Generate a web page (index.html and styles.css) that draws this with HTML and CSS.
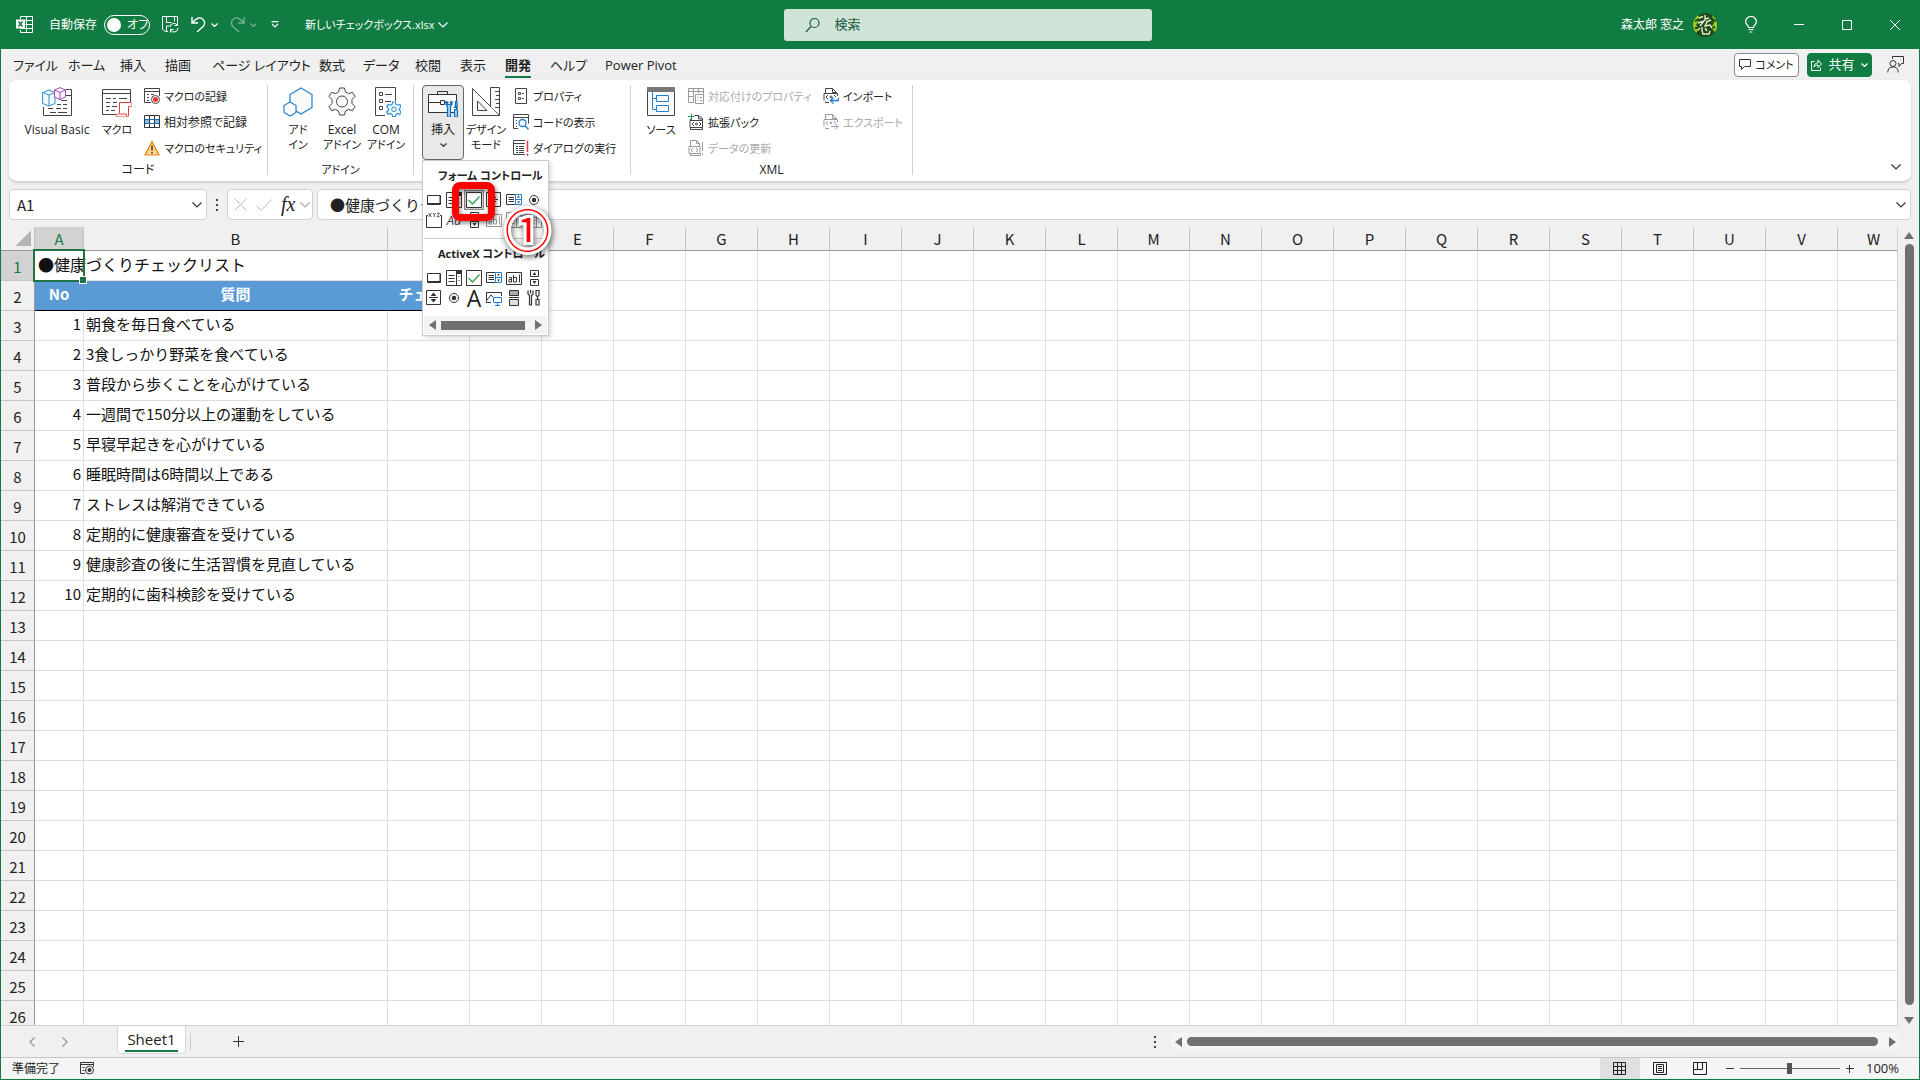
FILE: index.html
```
<!DOCTYPE html>
<html lang="ja">
<head>
  <meta charset="UTF-8">
  <title>新しいチェックボックス.xlsx</title>
  <link rel="stylesheet" href="styles.css">
</head>
<body>

  <header class="titlebar">
    <div class="title-left">
      <svg class="app-icon" width="17" height="17" viewBox="0 0 17 17" fill="none" stroke="#fff">
        <path d="M4.500 3V.5h12v16h-12V14M4.500 4.500h12M9.500 8.500h7M4.500 12.500h12M10.500.5v16"/>
        <path fill="#fff" stroke="none" d="M0 3.500h9v9H0z"/>
        <path stroke="#107c41" stroke-width="1.500" d="M2.500 5.500l4 5M6.500 5.500l-4 5"/>
      </svg>
      <span class="autosave">自動保存</span>
      <button class="toggle"><span class="knob"></span>オフ</button>
      <button class="tool" aria-label="保存">
        <svg width="17" height="17" viewBox="0 0 17 17" fill="none" stroke="#fff">
          <path d="M6 15.500H3L.5 13V.5h15v6M4.500.5v6h5M12.500.5v5M4.500 15v-5h3"/>
          <path d="M8 11a4 4 0 0 1 7.500-1.500M15.500 6.500v3h-3M16 12a4 4 0 0 1-7.500 2M8.500 16.500v-3h3"/>
        </svg>
      </button>
      <button class="tool" aria-label="元に戻す">
        <svg width="15" height="17" viewBox="0 0 15 17" fill="none" stroke="#fff" stroke-width="1.400">
          <path d="M1 1v6h6M1.500 6.500C5 2 9 .8 11.500 3s3 5 .5 7.500L6 16"/>
        </svg>
      </button>
      <svg class="mini" width="7" height="4" viewBox="0 0 7 4" fill="none" stroke="#fff" stroke-width="1.300"><path d="M.5.5l3 3 3-3"/></svg>
      <button class="tool faded" aria-label="やり直し">
        <svg width="15" height="17" viewBox="0 0 15 17" fill="none" stroke="#fff" stroke-width="1.400">
          <path d="M14 1v6H8M13.500 6.500C10 2 6 .8 3.500 3s-3 5-.5 7.500L9 16"/>
        </svg>
      </button>
      <svg class="mini faded" width="7" height="4" viewBox="0 0 7 4" fill="none" stroke="#fff" stroke-width="1.300"><path d="M.5.5l3 3 3-3"/></svg>
      <button class="tool tool-custom" aria-label="クイック アクセス">
        <svg width="8" height="7" viewBox="0 0 8 7" fill="none" stroke="#fff" stroke-width="1.200"><path d="M.5.600h7M1 3l3 3 3-3"/></svg>
      </button>
      <button class="filename">新しいチェックボックス.xlsx
        <svg width="10" height="6" viewBox="0 0 10 6" fill="none" stroke="#fff" stroke-width="1.200"><path d="M.5.5L5 5 9.500.5"/></svg>
      </button>
    </div>
    <label class="search">
      <svg width="16" height="16" viewBox="0 0 16 16" fill="none" stroke="#185c37" stroke-width="1.200"><circle cx="9.500" cy="6" r="4.500"/><path d="M6 9.500L1 15"/></svg>
      <input type="text" placeholder="検索">
    </label>
    <div class="title-right">
      <span class="user">森太郎 窓之</span>
      <svg class="avatar" width="24" height="24" viewBox="0 0 24 24" fill="none">
        <circle cx="12" cy="12" r="12" fill="#1d4a17"/>
        <path fill="#9ccc1f" d="M0 12a12 12 0 0 1 5-9.700L7 6l-4 6 3 4-3 4a12 12 0 0 1-3-8zM19 2.300A12 12 0 0 1 22 19l-4-4 3-5z"/>
        <path stroke="#1d4a17" stroke-width="2" d="M2 8l5-2M2 15h5M18 6l5 2M18 15l4-1"/>
        <path stroke="#e6eed0" stroke-width="1.400" d="M6 5l4-1.500M12 2v4l4-1M5 10l6-2-4 5M13 9l5-2M14 9l-2 4 5-1 2 3M5 17l2-2M9 14v4l1 3h6l1-3M12 15l2 3"/>
      </svg>
      <button class="tool bulb" aria-label="ヒント">
        <svg width="12" height="17" viewBox="0 0 12 17" fill="none" stroke="#fff" stroke-width="1.200"><path d="M3.500 11.500C3.500 9.500.6 8.500.6 5.500a5.400 5 0 0 1 10.800 0c0 3-2.900 4-2.900 6zM3.500 13.500h5M4.500 16h3"/></svg>
      </button>
      <button class="winctl" aria-label="最小化"><svg width="10" height="10" viewBox="0 0 10 10" stroke="#fff"><path d="M0 4.500h10"/></svg></button>
      <button class="winctl" aria-label="最大化"><svg width="10" height="10" viewBox="0 0 10 10" stroke="#fff" fill="none"><path d="M.5.5h9v9h-9z"/></svg></button>
      <button class="winctl" aria-label="閉じる"><svg width="10" height="10" viewBox="0 0 10 10" stroke="#fff"><path d="M0 0l10 10M10 0L0 10"/></svg></button>
    </div>
  </header>

  <nav class="tabs">
    <div class="tab-list">
      <a href="#">ファイル</a>
      <a href="#">ホーム</a>
      <a href="#">挿入</a>
      <a href="#">描画</a>
      <a href="#">ページ レイアウト</a>
      <a href="#">数式</a>
      <a href="#">データ</a>
      <a href="#">校閲</a>
      <a href="#">表示</a>
      <a href="#" class="active">開発</a>
      <a href="#">ヘルプ</a>
      <a href="#">Power Pivot</a>
    </div>
    <div class="tab-actions">
      <button class="comment">
        <svg width="12" height="11" viewBox="0 0 12 11" fill="none" stroke="#333"><path d="M.5.5h11v7h-6l-3 3v-3h-2z"/></svg>
        コメント
      </button>
      <button class="share">
        <svg width="11" height="12" viewBox="0 0 11 12" fill="none" stroke="#fff"><path d="M3.500 2.500h-3v9h9v-3M3 8c0-3 2-4 4-4V1l3.500 4L7 8.500V6C5 6 4 6.500 3 8z"/></svg>
        共有
        <svg width="7" height="4" viewBox="0 0 7 4" fill="none" stroke="#fff" stroke-width="1.200"><path d="M.5.5l3 3 3-3"/></svg>
      </button>
      <button class="tool" aria-label="ユーザー">
        <svg width="17" height="17" viewBox="0 0 17 17" fill="none" stroke="#333"><path d="M5.500 3V.5h11v7h-2l-2.500 3v-3h-1"/><circle cx="6" cy="7.500" r="3"/><path d="M.8 16.500c0-4 2.200-5.500 5.200-5.500s5.200 1.500 5.200 5.500"/></svg>
      </button>
    </div>
  </nav>

  <section class="ribbon">
    <div class="group group-code">
      <div class="group-body">
        <button class="big wide">
          <svg width="30" height="30" viewBox="0 0 30 30" fill="none" stroke="#444">
            <path d="M24 2.500h5.500v26h-28V20M24 8.500h5M8 25.500h6M16 25.500h9M19 13.500h6M15 17.500h4M21 17.500h4M14 21.500h5M21 21.500h4M6 21.500h5"/>
            <path stroke="#2b8fd6" fill="#f4f9fd" d="M.6 5.500L7 3l6 2.500v11L7 19 .6 16.500zM.6 5.500L7 8l6-2.500M7 8v11"/>
            <path stroke="#a349b5" fill="#fbf4fc" d="M12.500 3L18 .6 23.500 3v7L18 12.500 12.500 10zM12.500 3L18 5.500 23.500 3M18 5.500v7"/>
          </svg>
          <span>Visual Basic</span>
        </button>
        <button class="big">
          <svg width="30" height="30" viewBox="0 0 30 30" fill="none" stroke="#444">
            <path d="M14 27.500H.5v-25h28v13M.5 6.500h28M4 11.500h5M11 11.500h3M17 11.500h8M4 15.500h4M11 15.500h4M4 19.500h4M10 19.500h5M4 23.500h3M9 23.500h4"/>
            <path stroke="#e8413c" fill="#fff" d="M17.500 26V15.500h11c2 0 2 4 0 4h-2V29c0 .8-1 1-2 1h-9c-1.500 0-1.500-3 0-3h9v2"/>
          </svg>
          <span class="kana">マクロ</span>
        </button>
        <div class="stack">
          <button class="small kana">
            <svg width="16" height="16" viewBox="0 0 16 16" fill="none" stroke="#444"><path d="M7 14.500H.5V.5h15V8M.5 3.500h15M3 6.500h2M7 6.500h3M3 9.500h2M3 12.500h2"/><circle cx="11.500" cy="11.500" r="4" fill="#fff"/><circle cx="11.500" cy="11.500" r="2.500" fill="#e33" stroke="none"/></svg>
            マクロの記録
          </button>
          <button class="small">
            <svg width="16" height="16" viewBox="0 0 16 16" fill="none" stroke="#333"><path fill="#7fbdf0" stroke="none" d="M1 5h14v5H1z"/><path fill="#fff" stroke="none" d="M6 5h4v5H6z"/><path d="M.5 1.500h15v12H.5zM.5 5.500h15M.5 9.500h15M5.500 1.500v12M10.500 1.500v12"/><path stroke="#1a6fc0" d="M1 5.500h14M1 9.500h14"/></svg>
            相対参照で記録
          </button>
          <button class="small kana">
            <svg width="16" height="16" viewBox="0 0 16 16"><path d="M8 1.500l7 13.500H1z" fill="#fcd58a" stroke="#e08214" stroke-width="1.200"/><path d="M8 5.500v5M8 12v1.500" stroke="#333" stroke-width="1.400"/></svg>
            マクロのセキュリティ
          </button>
        </div>
      </div>
      <div class="group-name">コード</div>
    </div>

    <div class="group group-addin">
      <div class="group-body">
        <button class="big">
          <svg width="30" height="30" viewBox="0 0 30 30" fill="#fafafa" stroke="#1f7fd0" stroke-width="1.200"><path d="M18 1l11 6.500v13L18 27 7 20.500v-13z"/><path fill="#fff" d="M7 15l6 3.500v7L7 29l-6-3.500v-7z"/></svg>
          <span class="kana">アド<br>イン</span>
        </button>
        <button class="big">
          <svg width="30" height="30" viewBox="0 0 30 30" fill="#fafafa" stroke="#444"><path d="M12.500 1h5l1 4 3 1.600 4-1.300 2.500 4.200-3 3v4l3 3-2.500 4.200-4-1.300-3 1.600-1 4h-5l-1-4-3-1.600-4 1.300L2 19.500l3-3v-4l-3-3 2.500-4.200 4 1.300 3-1.600z"/><circle cx="15" cy="14.500" r="5.500"/></svg>
          <span>Excel<br><span class="kana">アドイン</span></span>
        </button>
        <button class="big">
          <svg width="30" height="30" viewBox="0 0 30 30" fill="none" stroke="#444"><path d="M14 28.500H4.500V.5h20V14M8.500 5.500h3v3h-3zM8.500 12.500h3v3h-3zM8.500 19.500h3v3h-3zM14 7.500h7M14 14.500h6"/><path stroke="#2b8fd6" stroke-width="1.200" fill="#f4f9fd" d="M21.700 15h2.600l.7 2.300 1.600.9 2.300-.8 1.300 2.300-1.700 1.700v1.800l1.700 1.700-1.300 2.300-2.300-.8-1.600.9-.7 2.300h-2.600l-.7-2.300-1.600-.9-2.300.8-1.300-2.300 1.700-1.700v-1.800l-1.700-1.700 1.300-2.300 2.300.8 1.600-.9z"/><circle cx="23" cy="22.300" r="2.300" stroke="#2b8fd6"/></svg>
          <span>COM<br><span class="kana">アドイン</span></span>
        </button>
      </div>
      <div class="group-name kana">アドイン</div>
    </div>

    <div class="group group-control">
      <div class="group-body">
        <div class="insert">
          <button class="big pressed">
            <svg width="30" height="30" viewBox="0 0 30 30" fill="none" stroke="#333"><path fill="#fafafa" d="M.5 7.500h28v18H.5z"/><path d="M9.500 7V4.500h10V7M.5 15.500h12M16.500 15.500h4M12.500 13.500h4v4h-4z"/><path stroke="#0f6cbd" fill="#a9d3f5" stroke-width="1.200" d="M18 14.500v3l1.500 2V30h3V19.500l1.500-2v-3l-1.500.5v2.500h-3V15zM27.500 14.500h1.500v5l1 1H26.500l1-1zM26.500 22.500h3V30h-3z"/></svg>
            <span>挿入</span>
            <svg class="drop" width="7" height="4" viewBox="0 0 7 4" fill="none" stroke="#333" stroke-width="1.200"><path d="M.5.5l3 2.800 3-2.800"/></svg>
          </button>

          <div class="gallery">
            <h3>フォーム コントロール</h3>
            <div class="controls">
              <button aria-label="ボタン"><svg><use href="#i-button"/></svg></button>
              <button aria-label="コンボ ボックス"><svg><use href="#i-combo"/></svg></button>
              <button class="hover" aria-label="チェック ボックス"><svg><use href="#i-check"/></svg></button>
              <button aria-label="スピン ボタン"><svg><use href="#i-spin"/></svg></button>
              <button aria-label="リスト ボックス"><svg><use href="#i-list"/></svg></button>
              <button aria-label="オプション ボタン"><svg><use href="#i-radio"/></svg></button>
              <button aria-label="グループ ボックス"><svg><use href="#i-group"/></svg></button>
              <button class="label-icon" aria-label="ラベル">Aa</button>
              <button aria-label="スクロール バー"><svg><use href="#i-scroll"/></svg></button>
              <button class="off" aria-label="テキスト フィールド"><svg><use href="#i-text"/></svg></button>
              <button class="off" aria-label="コンボ リスト"><svg><use href="#i-combo"/></svg></button>
              <button class="off" aria-label="コンボ ドロップダウン"><svg><use href="#i-combo"/></svg></button>
            </div>
            <h3 class="second">ActiveX コントロール</h3>
            <div class="controls">
              <button aria-label="コマンド ボタン"><svg><use href="#i-button"/></svg></button>
              <button aria-label="コンボ ボックス"><svg><use href="#i-combo"/></svg></button>
              <button aria-label="チェック ボックス"><svg><use href="#i-check"/></svg></button>
              <button aria-label="リスト ボックス"><svg><use href="#i-list"/></svg></button>
              <button aria-label="テキスト ボックス"><svg><use href="#i-text"/></svg></button>
              <button aria-label="スクロール バー"><svg><use href="#i-scroll"/></svg></button>
              <button aria-label="スピン ボタン"><svg><use href="#i-spin"/></svg></button>
              <button aria-label="オプション ボタン"><svg><use href="#i-radio"/></svg></button>
              <button class="letter" aria-label="ラベル">A</button>
              <button aria-label="イメージ"><svg><use href="#i-image"/></svg></button>
              <button aria-label="トグル ボタン"><svg><use href="#i-toggle"/></svg></button>
              <button aria-label="コントロールの選択"><svg><use href="#i-tools"/></svg></button>
            </div>
            <div class="gallery-scroll"><i class="arrow left"></i><span class="thumb"></span><i class="arrow right"></i></div>
          </div>
          <div class="mark-box"></div>
          <div class="mark-number">①</div>
        </div>
        <button class="big">
          <svg width="30" height="30" viewBox="0 0 30 30" fill="#fafafa" stroke="#444"><path d="M1.500 1.500v27h27z"/><path d="M6.500 14v9.500H16z"/><path d="M28.500 28V.5h-9v19M28 4.500h-4M28 8.500h-3M28 12.500h-4M28 16.500h-3M28 20.500h-4"/></svg>
          <span class="kana">デザイン<br>モード</span>
        </button>
        <div class="stack">
          <button class="small kana">
            <svg width="16" height="16" viewBox="0 0 16 16" fill="none" stroke="#444"><path d="M2.500.5h11v15h-11zM5.500 4.500h2v2h-2zM5.500 9.500h2v2h-2zM9 5.500h2M9 10.500h2"/></svg>
            プロパティ
          </button>
          <button class="small kana">
            <svg width="16" height="16" viewBox="0 0 16 16" fill="none" stroke="#444"><path d="M5 14.500H.5V.5h15v9M.5 3.500h15M3 6.500h1M3 9.500h1M3 12.500h1"/><circle cx="9.500" cy="9" r="3.500" stroke="#1f7fd0" stroke-width="1.300"/><path stroke="#1f7fd0" stroke-width="1.300" d="M12 11.500l3.500 4"/></svg>
            コードの表示
          </button>
          <button class="small kana">
            <svg width="16" height="16" viewBox="0 0 16 16" fill="none" stroke="#444"><path d="M12 14.500H.5V.5H12M.5 3.500H12M3 6.500h2M6 6.500h5M3 8.500h2M6 8.500h5M3 10.500h2M6 10.500h5M3 12.500h2M6 12.500h5"/><path stroke="#e8413c" stroke-width="1.500" d="M14.500.5V12M14.500 13.500V16"/></svg>
            ダイアログの実行
          </button>
        </div>
      </div>
    </div>

    <div class="group group-xml">
      <div class="group-body">
        <button class="big">
          <svg width="30" height="30" viewBox="0 0 30 30" fill="none" stroke="#444"><path fill="#fafafa" d="M1.500.5h27v28h-27z"/><path fill="#777" stroke="none" d="M1 0h28v5H1z"/><path stroke="#1f7fd0" d="M6.500 5v17.500H10M6.500 11.500H10M10.500 8.500h12v6h-12zM10.500 18.500h12v6h-12z"/></svg>
          <span class="kana">ソース</span>
        </button>
        <div class="stack maps">
          <button class="small kana" disabled>
            <svg width="16" height="16" viewBox="0 0 16 16" fill="none" stroke="#999"><path d="M6 14.500H.5V.5h15V6M.5 3.500h15M.5 8.500H6M5.500 1v13M10.500 1v4M7.500 6.500h8v9h-8zM9.500 9.500h1M9.500 12.500h1M12 9.500h2M12 12.500h2"/></svg>
            対応付けのプロパティ
          </button>
          <button class="small kana">
            <svg width="16" height="16" viewBox="0 0 16 16" fill="none" stroke="#444"><path d="M6.500 1.500h4l4 3V6M10.500 1.500v3.500h4M2.500 5v1M2.500 13.500v2h12v-2M2 6.500h12.500v7H2zM6 8l-2 2 2 2M11 8l2 2-2 2"/><circle cx="8.500" cy="10" r="1"/><path stroke="#1e9e52" d="M0 2.500h6M3.500 0v6"/></svg>
            拡張パック
          </button>
          <button class="small kana" disabled>
            <svg width="16" height="16" viewBox="0 0 16 16" fill="none" stroke="#999"><path d="M2.500 7V.5h6l3 3V7M8.500.5v3h3M2.500 13.500v2h10v-2M1 6.500h11v7H1zM5 8l-2 2 2 2M8 8l2 2-2 2M14.500 2v9M14.500 13v2"/></svg>
            データの更新
          </button>
        </div>
        <div class="stack">
          <button class="small kana">
            <svg width="16" height="16" viewBox="0 0 16 16" fill="none" stroke="#444"><path d="M2.500 5V.5h7l4 4V6M9.500.5v4h4M2.500 13.500v1H6M1 12.500V5.500h13.500V8M5 7L3 9l2 2M11 7l2 2"/><circle cx="8" cy="9" r="1"/><path stroke="#1f7fd0" stroke-width="1.300" d="M15.500 9.500v3H7.500M10.500 9.500l-3 3 3 3"/></svg>
            インポート
          </button>
          <button class="small kana" disabled>
            <svg width="16" height="16" viewBox="0 0 16 16" fill="none" stroke="#999"><path d="M2.500 5V.5h7l4 4V6M9.500.5v4h4M2.500 13.500v1H6M1 12.500V5.500h13.500V8M5 7L3 9l2 2M11 7l2 2M8 12.500h7M12 9.500l3 3-3 3"/><circle cx="8" cy="9" r="1"/></svg>
            エクスポート
          </button>
        </div>
      </div>
      <div class="group-name">XML</div>
    </div>
    <button class="collapse" aria-label="リボンを折りたたむ"><svg width="10" height="6" viewBox="0 0 10 6" fill="none" stroke="#333" stroke-width="1.200"><path d="M.5.5L5 5 9.500.5"/></svg></button>
  </section>

  <section class="formula">
    <div class="namebox">
      <input type="text" value="A1" aria-label="名前ボックス">
      <svg width="10" height="6" viewBox="0 0 10 6" fill="none" stroke="#333" stroke-width="1.200"><path d="M.5.5L5 5 9.500.5"/></svg>
    </div>
    <svg class="dots" width="2" height="12" viewBox="0 0 2 12" fill="#444"><path d="M0 0h2v2H0zM0 5h2v2H0zM0 10h2v2H0z"/></svg>
    <div class="fx">
      <svg width="13" height="13" viewBox="0 0 13 13" stroke="#bbb"><path d="M.5.5l12 12M12.500.5l-12 12"/></svg>
      <svg width="16" height="12" viewBox="0 0 16 12" stroke="#bbb" fill="none"><path d="M.5 6.500l4.500 5L15.500.5"/></svg>
      <i>fx</i>
      <svg width="10" height="6" viewBox="0 0 10 6" fill="none" stroke="#aaa" stroke-width="1.200"><path d="M.5.5L5 5 9.500.5"/></svg>
    </div>
    <div class="content">
      <input type="text" value="●健康づくりチェックリスト" aria-label="数式バー">
      <svg width="10" height="6" viewBox="0 0 10 6" fill="none" stroke="#333" stroke-width="1.200"><path d="M.5.5L5 5 9.500.5"/></svg>
    </div>
  </section>

  <main class="workbook">
    <div class="grid">
      <table class="sheet">
        <colgroup id="cols"></colgroup>
        <thead><tr id="letters"></tr></thead>
        <tbody id="rows"></tbody>
      </table>
    </div>
    <div class="vscroll"><i class="arrow up"></i><span class="thumb"></span><i class="arrow down"></i></div>
  </main>

  <div class="sheetbar">
    <button class="nav" aria-label="前のシート"><svg width="6" height="10" viewBox="0 0 6 10" fill="none" stroke="#999" stroke-width="1.300"><path d="M5.500.5L1 5l4.500 4.500"/></svg></button>
    <button class="nav" aria-label="次のシート"><svg width="6" height="10" viewBox="0 0 6 10" fill="none" stroke="#999" stroke-width="1.300"><path d="M.5.5L5 5 .5 9.500"/></svg></button>
    <button class="sheet-tab"><span>Sheet1</span></button>
    <span class="tab-line"></span>
    <button class="add" aria-label="新しいシート"><svg width="11" height="11" viewBox="0 0 11 11" stroke="#333"><path d="M5.500 0v11M0 5.500h11"/></svg></button>
    <svg class="dots" width="2" height="12" viewBox="0 0 2 12" fill="#444"><path d="M0 0h2v2H0zM0 5h2v2H0zM0 10h2v2H0z"/></svg>
    <div class="hscroll"><i class="arrow left"></i><span class="thumb"></span><i class="arrow right"></i></div>
  </div>

  <footer class="status">
    <span>準備完了</span>
    <svg class="record" width="15" height="13" viewBox="0 0 15 13" fill="none" stroke="#333"><path d="M5 11.500H.5V.5h13v4M.5 2.500h13M2.500 5.500h2M2.500 8.500h2"/><circle cx="9.500" cy="8" r="4"/><circle cx="9.500" cy="8" r="2" fill="#333" stroke="none"/></svg>
    <div class="views">
      <button class="view on" aria-label="標準"><svg width="13" height="13" viewBox="0 0 13 13" fill="none" stroke="#222"><path d="M.5.5h12v12H.5zM.5 4.500h12M.5 8.500h12M4.500.5v12M8.500.5v12"/></svg></button>
      <button class="view" aria-label="ページ レイアウト"><svg width="14" height="13" viewBox="0 0 14 13" fill="none" stroke="#222"><path d="M.5.5h13v12H.5zM3.500 2.500h7v8h-7zM5 4.500h4M5 6.500h4M5 8.500h4"/></svg></button>
      <button class="view" aria-label="改ページ"><svg width="14" height="13" viewBox="0 0 14 13" fill="none" stroke="#222"><path d="M.5.5h13v12H.5zM4.500.5v7h5v-7M.5 7.500h4"/></svg></button>
    </div>
    <button class="step" aria-label="縮小"><svg width="8" height="8" viewBox="0 0 8 8" stroke="#333"><path d="M0 3.500h8"/></svg></button>
    <input class="zoom" type="range" min="0" max="100" value="50" aria-label="ズーム">
    <button class="step" aria-label="拡大"><svg width="8" height="8" viewBox="0 0 8 8" stroke="#333"><path d="M0 3.500h8M3.500 0v8"/></svg></button>
    <span class="percent">100%</span>
  </footer>

  <svg class="defs" width="0" height="0">
    <defs>
      <symbol id="i-button" viewBox="0 0 16 16"><path fill="none" stroke="#333" d="M1.500 3.500h13v9h-13z"/><path stroke="#333" d="M14 4v8M1 11.500h13"/></symbol>
      <symbol id="i-combo" viewBox="0 0 16 16"><path fill="none" stroke="#333" d="M.5.5h15v15H.5zM10.500 1v14M2.500 5.500h6M2.500 8.500h6M2.500 11.500h6M13 6v1M13 10v1"/><path fill="#333" d="M10 0h6v4h-6z"/></symbol>
      <symbol id="i-check" viewBox="0 0 16 16"><path fill="#fff" stroke="#333" d="M.5.5h15v15H.5z"/><path fill="none" stroke="#2ea04f" stroke-width="1.300" d="M2.500 8l4 4 7-7.500"/></symbol>
      <symbol id="i-spin" viewBox="0 0 16 16"><path fill="none" stroke="#333" d="M.5.5h14v14H.5zM3 7.500h9"/><path fill="#333" d="M7.500 2.500l3 3.500h-6zM7.500 12.500l3-3.500h-6z"/></symbol>
      <symbol id="i-list" viewBox="0 0 16 16"><path fill="none" stroke="#333" d="M9 2.500H.5v10H9M2.500 5.500H8M2.500 7.500H8M2.500 9.500H8"/><path fill="none" stroke="#1f7fd0" d="M9.500 2.500h6v10h-6zM9.500 7.500h6"/><path fill="#333" d="M12.500 3.500l1.500 2h-3zM12.500 11.500l1.500-2h-3z"/></symbol>
      <symbol id="i-radio" viewBox="0 0 16 16"><circle cx="8" cy="8" r="4.500" fill="none" stroke="#333"/><circle cx="8" cy="8" r="2.300" fill="#333"/></symbol>
      <symbol id="i-group" viewBox="0 0 16 16"><path fill="none" stroke="#333" d="M2 3.500H.5v12h15v-12H14"/><path fill="none" stroke="#333" stroke-width=".8" d="M2.500 1l3 4M5.500 1l-3 4M7 1l1.300 2L9.700 1M8.300 3v2M11 1.300h2.500L11 4.700h2.700"/></symbol>
      <symbol id="i-scroll" viewBox="0 0 16 16"><path fill="none" stroke="#333" d="M4.500.5h8v6h-8zM4.500 9.500h8v6h-8z"/><path fill="#333" d="M8.500 2l2 3h-4zM8.500 14l2-3h-4z"/></symbol>
      <symbol id="i-text" viewBox="0 0 16 16"><path fill="none" stroke="#333" d="M.5 2.500h15v12H.5zM13.500 4.500v8M3 7.500h2.500V12H3V9.500h2.500M7.500 5v7h3V7.500h-3"/></symbol>
      <symbol id="i-image" viewBox="0 0 16 16"><path fill="none" stroke="#333" d="M5 12.500H.5v-10h15V6M1 10l4-5 3 3"/><path fill="#fff" stroke="#1f7fd0" d="M7.500 7.500h8v5h-8zM11.500 12.500v2.500M9 15.500h5"/></symbol>
      <symbol id="i-toggle" viewBox="0 0 16 16"><path fill="#aaa" stroke="#333" d="M3.500.5h9v5h-9z"/><path fill="#ddd" stroke="#333" d="M3.500 9.500h9v6h-9z"/><path stroke="#333" d="M3 7.500h10"/></symbol>
      <symbol id="i-tools" viewBox="0 0 16 16"><path fill="none" stroke="#333" stroke-width="1.200" d="M2 .5V4l1.500 1.500V15h2V5.500L7 4V.5M4.500 0v3.500M10 .5h3V5l-1.500 2L10 5zM11.500 7v2M10 9.500h3V15h-3z"/></symbol>
    </defs>
  </svg>

  <script>
    const widths = [34, 49, 304, 82];
    const letters = 'ABCDEFGHIJKLMNOPQRSTUVW'.split('');
    const questions = [
      '朝食を毎日食べている',
      '3食しっかり野菜を食べている',
      '普段から歩くことを心がけている',
      '一週間で150分以上の運動をしている',
      '早寝早起きを心がけている',
      '睡眠時間は6時間以上である',
      'ストレスは解消できている',
      '定期的に健康審査を受けている',
      '健康診査の後に生活習慣を見直している',
      '定期的に歯科検診を受けている'
    ];

    document.getElementById('cols').innerHTML = ['', ...letters].map((l, i) =>
      '<col style="width:' + (widths[i] || 72) + 'px">').join('');

    document.getElementById('letters').innerHTML = '<th class="corner"></th>' + letters.map(l =>
      '<th' + (l === 'A' ? ' class="current"' : '') + '>' + l + '</th>').join('');

    let html = '';
    for (let r = 1; r <= 26; r++) {
      const cells = letters.map(() => '');
      if (r === 1) cells[0] = '●健康づくりチェックリスト';
      if (r === 2) { cells[0] = 'No'; cells[1] = '質問'; cells[2] = 'チェック'; }
      if (r > 2 && r < 13) { cells[0] = r - 2; cells[1] = questions[r - 3]; }
      html += '<tr class="' + (r === 1 ? 'first' : r === 2 ? 'head' : '') + '"><th' + (r === 1 ? ' class="current"' : '') + '>' + r + '</th>' +
        cells.map(c => '<td>' + c + '</td>').join('') + '</tr>';
    }
    document.getElementById('rows').innerHTML = html;
  </script>

</body>
</html>
```

FILE: styles.css
```
* {
  box-sizing: border-box;
}

body {
  margin: 0;
  height: 100vh;
  display: flex;
  flex-direction: column;
  overflow: hidden;
  background-color: #f0f0f0;
  border: 1px solid #107c41;
  border-top: none;
  color: #222;
  font-family: "Open Sans", "Noto Sans CJK JP", sans-serif;
  font-size: 12px;
  line-height: 15px;
  font-feature-settings: "palt";
}

button, input {
  margin: 0;
  padding: 0;
  border: none;
  background: none;
  color: inherit;
  font: inherit;
  font-feature-settings: inherit;
}

svg {
  display: block;
  flex: none;
}

.defs {
  position: absolute;
}

.faded {
  opacity: 0.4;
}

.kana {
  font-size: 11px;
}

/* title bar */
.titlebar {
  flex: none;
  height: 49px;
  padding-left: 15px;
  display: grid;
  grid-template-columns: 1fr 368px 1fr;
  align-items: center;
  background-color: #107c41;
  color: #fff;
}

.title-left, .title-right {
  display: flex;
  align-items: center;
  white-space: nowrap;
}

.title-right {
  justify-content: flex-end;
}

.autosave {
  margin-left: 16px;
}

.toggle {
  display: flex;
  align-items: center;
  gap: 6px;
  width: 46px;
  height: 20px;
  margin-left: 7px;
  padding-left: 2px;
  border: 1px solid #fff;
  border-radius: 10px;
}

.knob {
  width: 14px;
  height: 14px;
  border-radius: 50%;
  background-color: #fff;
}

.tool {
  margin-left: 12px;
}

.mini {
  margin-left: 5px;
}

.tool-custom {
  margin-left: 14px;
}

.filename {
  display: flex;
  align-items: center;
  gap: 4px;
  margin-left: 26px;
  font-size: 11px;
}

.search {
  display: flex;
  align-items: center;
  gap: 14px;
  height: 32px;
  padding-left: 21px;
  border-radius: 3px;
  background-color: #cfe3d7;
}

.search input {
  flex: 1;
  outline: none;
  font-size: 13px;
}

.search input::placeholder {
  color: #185c37;
}

.avatar {
  margin-left: 9px;
}

.bulb {
  margin-left: 28px;
  margin-right: 18px;
}

.winctl {
  width: 48px;
  height: 48px;
  display: flex;
  align-items: center;
  justify-content: center;
}

/* ribbon tabs */
.tabs {
  flex: none;
  height: 31px;
  display: flex;
  align-items: center;
  justify-content: space-between;
  padding: 0 15px 0 12px;
  font-size: 13px;
}

.tab-list {
  display: grid;
  grid-template-columns: 55px 52px 45px 47px 107px 44px 52px 45px 45px 45px 55px auto;
}

.tab-list a {
  justify-self: start;
  padding: 4px 0 2px;
  border-bottom: 2px solid transparent;
  color: #222;
  line-height: 18px;
  text-decoration: none;
  white-space: nowrap;
}

.tab-list .active {
  border-color: #107c41;
  font-weight: bold;
}

.tab-actions {
  display: flex;
  align-items: center;
  gap: 8px;
}

.tab-actions .tool {
  margin-left: 7px;
}

.comment, .share {
  display: flex;
  align-items: center;
  justify-content: center;
  gap: 4px;
  width: 65px;
  height: 24px;
  border: 1px solid #888;
  border-radius: 4px;
  background-color: #fff;
  font-size: 11px;
  white-space: nowrap;
}

.share {
  gap: 6px;
  border-color: #107c41;
  background-color: #107c41;
  color: #fff;
  font-size: 13px;
}

/* ribbon */
.ribbon {
  flex: none;
  position: relative;
  display: flex;
  height: 102px;
  margin: 0 8px;
  border-bottom: 1px solid #d0d0d0;
  border-radius: 8px;
  background-color: #fff;
  box-shadow: 0 1px 3px rgba(0, 0, 0, 0.12);
}

.group {
  display: flex;
  flex-direction: column;
  justify-content: space-between;
  margin: 5px 0 6px;
  border-right: 1px solid #d0d0d0;
}

.group-code {
  width: 259px;
}

.group-addin {
  width: 146px;
}

.group-control {
  width: 217px;
}

.group-xml {
  width: 282px;
}

.group-body {
  display: flex;
  align-items: flex-start;
  padding-left: 8px;
}

.group-code .group-body {
  padding-left: 10px;
}

.group-name {
  text-align: center;
  line-height: 10px;
}

.big {
  display: flex;
  flex: none;
  flex-direction: column;
  align-items: center;
  width: 44px;
  padding-top: 2px;
  white-space: nowrap;
}

.big > span {
  margin-top: 5px;
}

.wide {
  width: 76px;
}

.pressed {
  width: 42px;
  height: 75px;
  padding-top: 1px;
  border: 1px solid #666;
  border-radius: 4px;
  background-color: #e9e9e9;
}

.drop {
  margin-top: 6px;
}

.stack {
  display: flex;
  flex: none;
  flex-direction: column;
  gap: 10px;
  margin-top: 3px;
  margin-left: 5px;
}

.maps {
  width: 130px;
}

.small {
  display: flex;
  align-items: center;
  gap: 4px;
  height: 16px;
  white-space: nowrap;
}

.small:disabled {
  color: #aaa;
}

.collapse {
  margin-left: auto;
  align-self: flex-end;
  padding: 0 10px 11px;
}

/* insert gallery */
.insert {
  position: relative;
}

.gallery {
  position: absolute;
  z-index: 2;
  top: 75px;
  left: 0;
  width: 127px;
  height: 176px;
  padding: 1px;
  overflow: hidden;
  border: 1px solid #ccc;
  background-color: #fff;
  box-shadow: 2px 2px 4px rgba(0, 0, 0, 0.15);
}

.gallery h3 {
  margin: 6px 0 6px 14px;
  font-size: 11px;
  line-height: 16px;
  white-space: nowrap;
}

.gallery .second {
  margin: 0;
  padding: 7px 0 6px 14px;
  border-top: 1px solid #ccc;
}

.controls {
  display: grid;
  grid-template-columns: repeat(6, 20px);
  grid-auto-rows: 20px;
  height: 48px;
}

.controls button {
  display: flex;
  align-items: center;
  justify-content: center;
}

.controls svg {
  width: 16px;
  height: 16px;
}

.controls .hover {
  border: 1px solid #888;
  background-color: #ccc;
}

.controls .off {
  opacity: 0.5;
}

.controls .label-icon {
  color: #444;
  font-size: 13px;
  font-style: italic;
}

.controls .letter {
  font-size: 23px;
}

.gallery-scroll {
  display: flex;
  align-items: center;
  gap: 5px;
  height: 18px;
  padding: 0 5px;
  background-color: #f3f3f3;
}

.gallery-scroll .thumb {
  flex: 1;
  height: 9px;
  margin-right: 5px;
  background-color: #707070;
}

.mark-box {
  position: absolute;
  z-index: 3;
  top: 97px;
  left: 30px;
  width: 43px;
  height: 39px;
  border: 7px solid #f00;
  border-radius: 8px;
  box-shadow: 1px 2px 4px rgba(0, 0, 0, 0.5), inset 1px 2px 5px rgba(0, 0, 0, 0.5);
}

.mark-number {
  position: absolute;
  z-index: 4;
  top: 120px;
  left: 83px;
  color: #f00;
  font-family: "Noto Sans CJK JP", sans-serif;
  font-size: 45px;
  line-height: 48px;
  -webkit-text-stroke: 6px #fff;
  paint-order: stroke fill;
  filter: drop-shadow(1px 2px 3px rgba(0, 0, 0, 0.6));
}

/* arrows of the scroll bars */
.arrow {
  flex: none;
  border: 5px solid transparent;
}

.arrow.left {
  border-left: none;
  border-right: 7px solid #707070;
}

.arrow.right {
  border-right: none;
  border-left: 7px solid #707070;
}

.arrow.up {
  border-top: none;
  border-bottom: 7px solid #707070;
}

.arrow.down {
  border-bottom: none;
  border-top: 7px solid #707070;
}

/* formula bar */
.formula {
  flex: none;
  display: flex;
  align-items: center;
  margin: 7px 8px;
  height: 31px;
  font-family: "Noto Sans CJK JP", sans-serif;
  font-size: 15px;
  font-feature-settings: normal;
}

.namebox, .fx, .content {
  display: flex;
  align-items: center;
  height: 31px;
  border: 1px solid #d0d0d0;
  border-radius: 4px;
  background-color: #fff;
}

.namebox {
  width: 198px;
  padding: 0 4px 0 7px;
}

.namebox input, .content input {
  flex: 1;
  min-width: 0;
  outline: none;
}

.formula .dots {
  margin: 0 9px;
}

.fx {
  width: 86px;
  gap: 9px;
  padding: 0 3px 0 6px;
}

.fx i {
  margin-left: auto;
  font-family: "Liberation Serif", serif;
  font-size: 20px;
}

.fx i + svg {
  margin-left: -4px;
}

.content {
  flex: 1;
  margin-left: 4px;
  padding: 0 4px 0 12px;
}

/* cells */
.workbook {
  flex: 1;
  min-height: 0;
  display: flex;
}

.grid {
  flex: 1;
  min-width: 0;
  overflow: hidden;
  border-right: 1px solid #d0d0d0;
  border-bottom: 1px solid #d0d0d0;
}

.sheet {
  width: 0;
  table-layout: fixed;
  border-collapse: separate;
  border-spacing: 0;
  font-family: "Noto Sans CJK JP", sans-serif;
  font-size: 15px;
  line-height: 20px;
  font-feature-settings: normal;
}

.sheet th {
  padding: 0;
  border-right: 1px solid #c4c4c4;
  border-bottom: 1px solid #999;
  background-color: #f0f0f0;
  font-weight: normal;
}

.sheet thead th {
  height: 24px;
}

.sheet tbody th {
  padding-top: 3px;
  border-right-color: #999;
  border-bottom-color: #c4c4c4;
}

.sheet .current {
  background-color: #d2d2d2;
  color: #107c41;
}

.sheet .corner {
  background-image: linear-gradient(to bottom right, transparent 50%, #b4b4b4 50%);
  background-size: 15px 15px;
  background-position: 15px 4px;
  background-repeat: no-repeat;
}

.sheet td {
  height: 30px;
  padding: 0 2px 3px;
  border-right: 1px solid #dedede;
  border-bottom: 1px solid #dedede;
  background-color: #fff;
  color: #111;
  white-space: nowrap;
}

.sheet td:nth-child(2) {
  text-align: right;
}

.sheet .first td {
  font-size: 16px;
}

.sheet .first td:nth-child(2) {
  position: relative;
  padding-left: 3px;
  text-align: left;
}

/* selection frame with its fill handle */
.first td:nth-child(2)::before {
  content: "";
  position: absolute;
  inset: -2px -2px -2px -2px;
  border: 2px solid #217346;
}

.first td:nth-child(2)::after {
  content: "";
  position: absolute;
  right: -4px;
  bottom: -4px;
  width: 6px;
  height: 6px;
  border: 1px solid #fff;
  box-sizing: content-box;
  background-color: #217346;
}

.sheet .head td:nth-child(-n+4) {
  border-right-color: #5b9bd5;
  border-bottom-color: #000;
  background-color: #5b9bd5;
  color: #fff;
  font-weight: bold;
  text-align: center;
}

.vscroll {
  display: flex;
  flex-direction: column;
  align-items: center;
  gap: 5px;
  width: 21px;
  padding: 5px 3px 2px 4px;
}

.vscroll .thumb {
  flex: 1;
  width: 9px;
  margin-bottom: 7px;
  border-radius: 5px;
  background-color: #707070;
}

/* sheet tabs */
.sheetbar {
  flex: none;
  display: flex;
  align-items: center;
  height: 31px;
}

.nav {
  width: 33px;
  padding-left: 28px;
}

.sheet-tab {
  width: 69px;
  height: 28px;
  margin-left: 50px;
  align-self: flex-start;
  border: 1px solid #d8d8d8;
  border-top: none;
  border-radius: 0 0 5px 5px;
  background-color: #fff;
  font-size: 15px;
}

.sheet-tab span {
  display: inline-block;
  padding: 0 2px;
  border-bottom: 2px solid #107c41;
  line-height: 22px;
}

.tab-line {
  width: 1px;
  height: 18px;
  margin-left: 4px;
  background-color: #ccc;
}

.add {
  margin-left: 42px;
}

.sheetbar .dots {
  margin-left: auto;
  margin-right: 15px;
}

.hscroll {
  display: flex;
  align-items: center;
  gap: 5px;
  width: 38%;
  height: 17px;
  margin-right: 19px;
  padding: 0 4px;
  border-radius: 8px;
  background-color: #f5f5f5;
}

.hscroll .thumb {
  flex: 1;
  height: 9px;
  margin-right: 6px;
  border-radius: 5px;
  background-color: #707070;
}

/* status bar */
.status {
  flex: none;
  display: flex;
  align-items: center;
  height: 22px;
  padding: 0 20px 0 11px;
  border-top: 1px solid #c6c6c6;
  background-color: #f5f5f5;
}

.record {
  margin-left: 20px;
}

.views {
  display: flex;
  height: 21px;
  margin-left: auto;
}

.view {
  display: flex;
  align-items: center;
  justify-content: center;
  width: 40px;
}

.view.on {
  background-color: #e0e0e0;
}

.step {
  margin-left: 6px;
}

.zoom {
  appearance: none;
  width: 100px;
  height: 12px;
  margin-left: 6px;
}

.zoom::-webkit-slider-runnable-track {
  height: 1px;
  background-color: #666;
}

.zoom::-webkit-slider-thumb {
  appearance: none;
  width: 5px;
  height: 11px;
  margin-top: -5px;
  background-color: #555;
}

.percent {
  margin-left: 12px;
  font-size: 13px;
}
```
